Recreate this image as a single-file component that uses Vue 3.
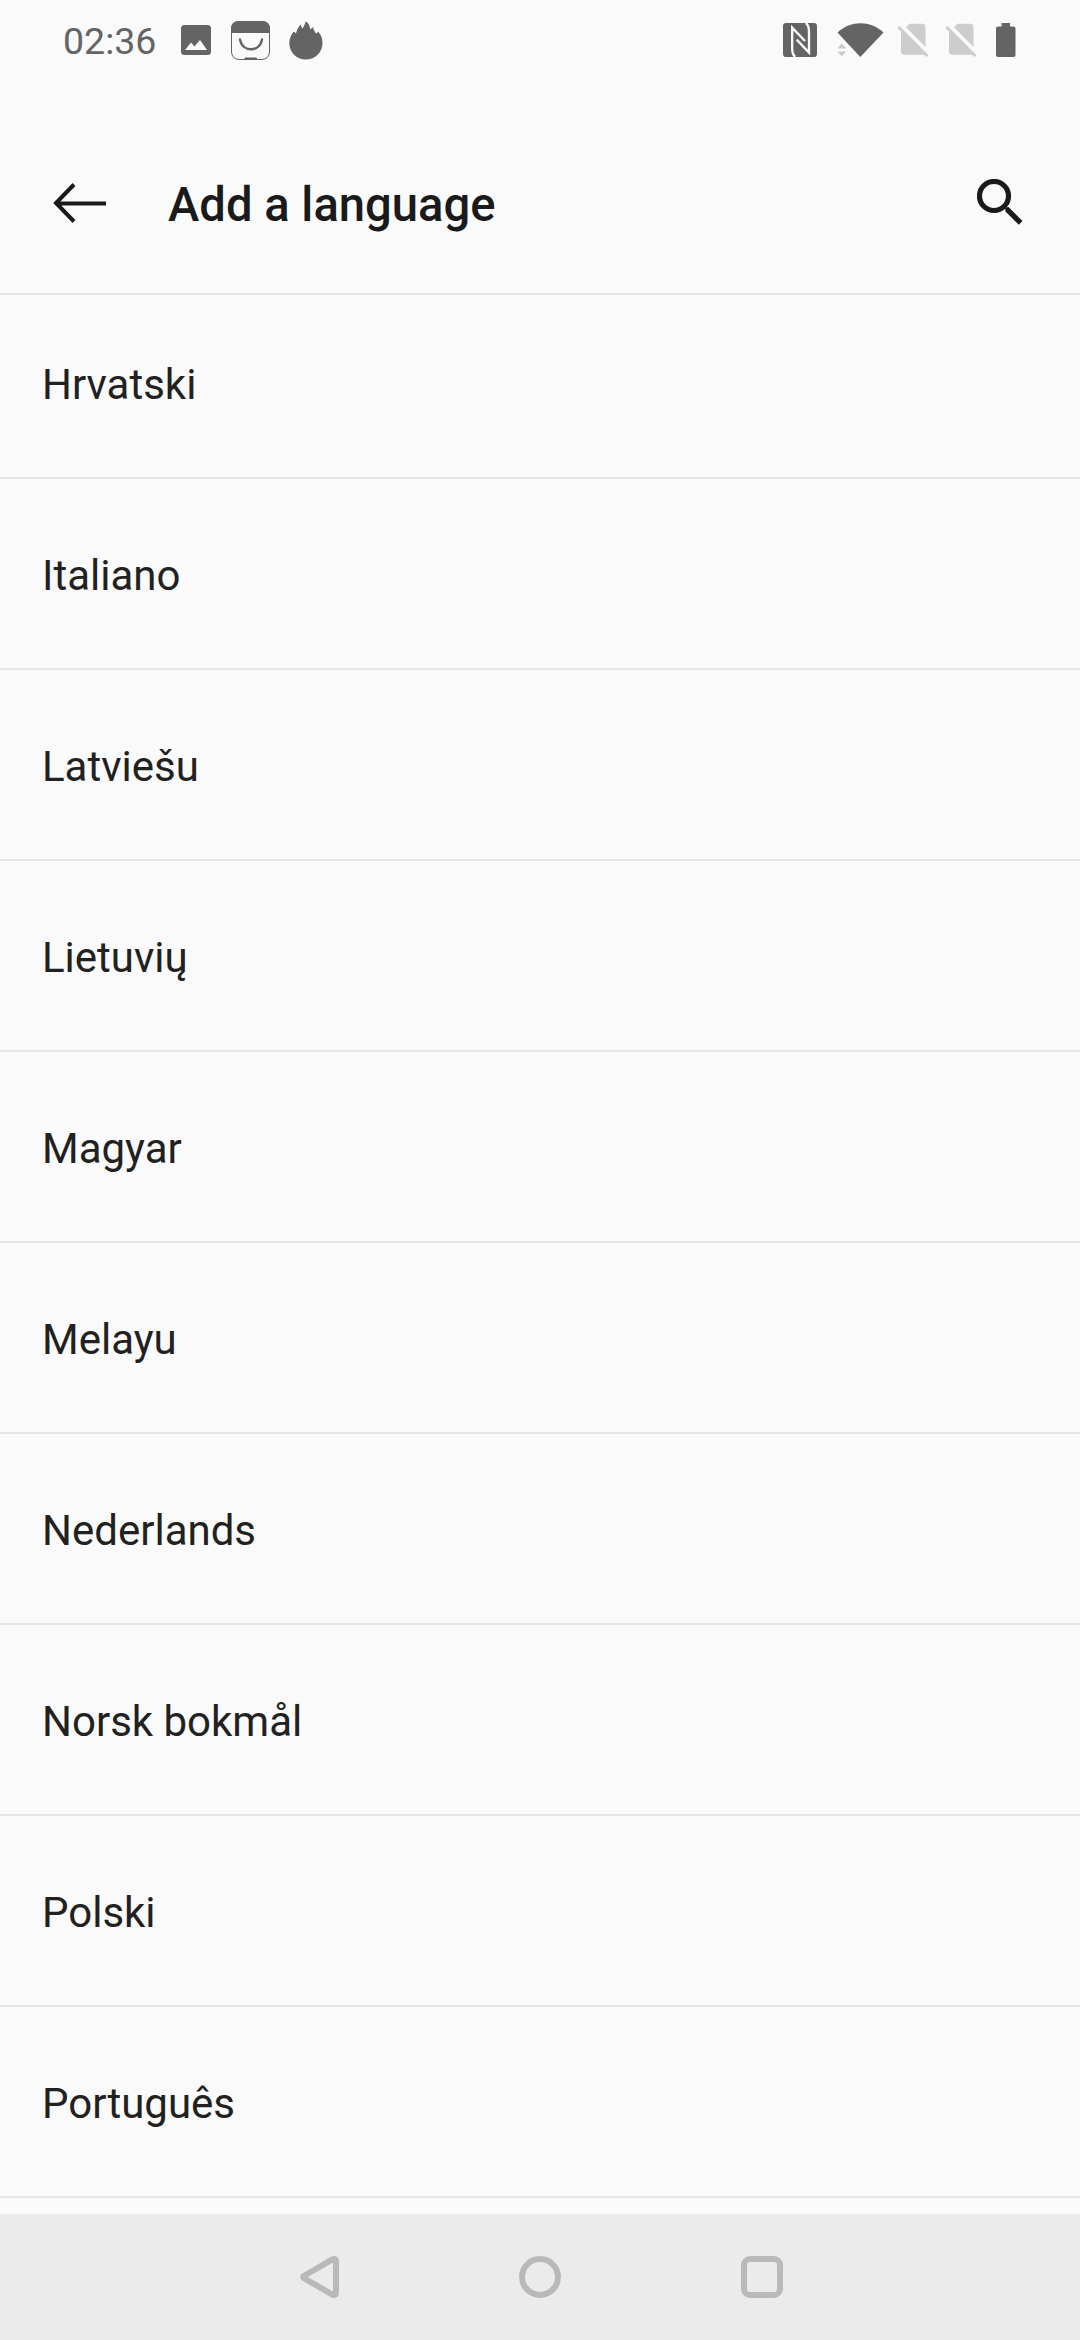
<script setup>
const languages = [
  'Hrvatski',
  'Italiano',
  'Latviešu',
  'Lietuvių',
  'Magyar',
  'Melayu',
  'Nederlands',
  'Norsk bokmål',
  'Polski',
  'Português',
]
</script>

<template>
  <div class="screen">
    <div class="status">
      <span class="clock">02:36</span>
      <svg class="photo" width="30" height="30" viewBox="0 0 30 30">
        <rect width="30" height="30" rx="3.5" fill="#646464" />
        <path d="M4 25 L10 17.5 L13.5 21.5 L19 15 L26 25 Z" fill="#fafafa" />
      </svg>
      <svg class="app" width="39" height="39" viewBox="0 0 39 39">
        <rect x=".5" y=".5" width="38" height="38" rx="7.5" fill="none" stroke="#646464" />
        <path d="M0 12 V8 Q0 0 8 0 H31 Q39 0 39 8 V12 Z" fill="#646464" />
        <path d="M9 18.5 C11 31.5 29 31.5 31 18.5" fill="none" stroke="#646464" stroke-width="2.3" stroke-linecap="round" />
        <path d="M13.5 39 V37.5 Q13.5 36.5 14.5 36.5 H25 Q26 36.5 26 37.5 V39 Z" fill="#646464" />
      </svg>
      <svg class="flame" width="34" height="39" viewBox="0 0 34 39">
        <path
          d="M16.8 38.5 C7.500 38.500 .3 31 .3 22 C.3 17.500 2 14 4.600 10.500 L7 12.300 C8 9 9 6.500 11.500 3.500 L13.400 7.800 C14.800 5.500 15.800 3.500 16.700 .5 C19.300 2 20.700 4 21.200 8.500 L24 6 C24.500 8.500 25.500 10.500 27 12.500 L29.300 10.800 C32 14 33.500 17.500 33.500 22 C33.500 31 26.300 38.500 16.800 38.500 Z"
          fill="#646464"
        />
      </svg>
      <span class="spacer"></span>
      <svg class="nfc" width="34" height="34" viewBox="0 0 102 102">
        <rect x="0" y="0" width="102" height="102" rx="10" fill="#646464" />
        <path
          d="M37 101 C30 97 27.500 90 27.500 76 V14 L66 54 M68 0 C76 5 78 14 78 27 V89 L41 50"
          fill="none"
          stroke="#fafafa"
          stroke-width="7"
        />
      </svg>
      <svg class="wifi" width="48" height="34" viewBox="0 0 48 34">
        <path d="M.5 9.500 C14 -2.700 33 -2.700 46.500 9.500 L23.300 34 Z" fill="#646464" />
        <path d="M0 19 H6 L10 23.500 V34 H0 Z" fill="#fafafa" />
        <path d="M.3 25.500 L4.800 20.500 L9.300 25.500 Z M.3 28.500 L4.800 33.300 L9.300 28.500 Z" fill="#cbcbcb" />
      </svg>
      <svg v-for="n in 2" :key="n" class="sim" width="32" height="34" viewBox="0 0 32 34">
        <path d="M12.500 .8 H25.500 Q28.500 .8 28.500 3.800 V24 L9 4.300 Z" fill="#cdcdcd" />
        <path d="M4 7 L28.500 31.800 H7 Q4 31.800 4 28.800 Z" fill="#cdcdcd" />
        <path d="M2.200 4.800 L29.700 32.300" stroke="#cdcdcd" stroke-width="2.800" stroke-linecap="round" />
      </svg>
      <svg class="battery" width="20" height="34" viewBox="0 0 20 34">
        <path
          d="M5.500 0 H14 V3.500 H17.500 Q19.500 3.500 19.500 5.500 V32 Q19.500 34 17.500 34 H2 Q0 34 0 32 V5.500 Q0 3.500 2 3.500 H5.500 Z"
          fill="#646464"
        />
      </svg>
    </div>

    <header class="bar">
      <svg class="back" width="54" height="40" viewBox="0 0 54 40">
        <path d="M21 1.500 L3 20 L21 38.500 M3 20.500 H53" fill="none" stroke="#1a1a1a" stroke-width="4" />
      </svg>
      <h1 class="title">Add a language</h1>
      <svg class="search" width="46" height="46" viewBox="0 0 46 46">
        <circle cx="17" cy="17" r="14.500" fill="none" stroke="#1a1a1a" stroke-width="5.200" />
        <path d="M28 28.500 L31.500 28 L45.500 42 L41.800 45.800 L28.500 32.500 Z" fill="#1a1a1a" />
      </svg>
    </header>

    <main class="list">
      <ul class="rows">
        <li v-for="name in languages" :key="name" class="row">{{ name }}</li>
      </ul>
    </main>

    <nav class="nav">
      <svg width="42" height="42" viewBox="0 0 42 42">
        <path d="M6.800 20 L35 3.600 Q39 1.800 39 5.500 V36.500 Q39 40.200 35 38.400 L6.800 22 Q5.500 21 6.800 20 Z" class="glyph" />
      </svg>
      <svg width="42" height="42" viewBox="0 0 42 42">
        <circle cx="21" cy="21" r="18" class="glyph" />
      </svg>
      <svg width="42" height="42" viewBox="0 0 42 42">
        <rect x="3" y="3" width="36" height="36" rx="6" class="glyph" />
      </svg>
    </nav>
  </div>
</template>

<style>
body {
  margin: 0;
}
</style>

<style scoped>
.screen {
  width: 1080px;
  height: 2340px;
  display: flex;
  flex-direction: column;
  overflow: hidden;
  background: #fafafa;
  font-family: Roboto, "Noto Sans", sans-serif;
}
svg {
  display: block;
  flex: none;
}
.status {
  box-sizing: border-box;
  height: 80px;
  padding: 0 64px 0 63px;
  display: flex;
  align-items: center;
  flex: none;
}
.clock {
  width: 118px;
  font-size: 37.5px;
  line-height: 44px;
  color: #646464;
  padding-top: 2px;
}
.app {
  margin-left: 20px;
}
.flame {
  margin-left: 19px;
}
.spacer {
  flex: 1;
}
.wifi {
  margin-left: 20px;
}
.sim {
  margin-left: 12px;
}
.sim + .sim {
  margin-left: 16px;
}
.battery {
  margin-left: 19px;
}
.bar {
  box-sizing: border-box;
  height: 215px;
  flex: none;
  display: flex;
  align-items: flex-start;
  padding: 0 57px 0 53px;
  border-bottom: 2px solid #e6e6e6;
}
.back {
  margin-top: 103px;
}
.title {
  flex: 1;
  margin: 96px 0 0 61px;
  font-size: 47.2px;
  line-height: 58px;
  font-weight: 500;
  color: #1a1a1a;
}
.search {
  margin-top: 99px;
}
.list {
  flex: 1;
  min-height: 0;
  overflow: hidden;
}
.rows {
  list-style: none;
  margin: -7px 0 0;
  padding: 0;
}
.row {
  box-sizing: border-box;
  height: 191px;
  padding: 4px 42px 0;
  display: flex;
  align-items: center;
  border-bottom: 2px solid #e6e6e6;
  font-size: 42px;
  line-height: 50px;
  color: #212121;
}
.nav {
  height: 126px;
  flex: none;
  display: flex;
  align-items: center;
  justify-content: center;
  gap: 180px;
  background: #ebebeb;
}
.glyph {
  fill: none;
  stroke: #b9b9b9;
  stroke-width: 6;
  stroke-linejoin: round;
}
</style>
